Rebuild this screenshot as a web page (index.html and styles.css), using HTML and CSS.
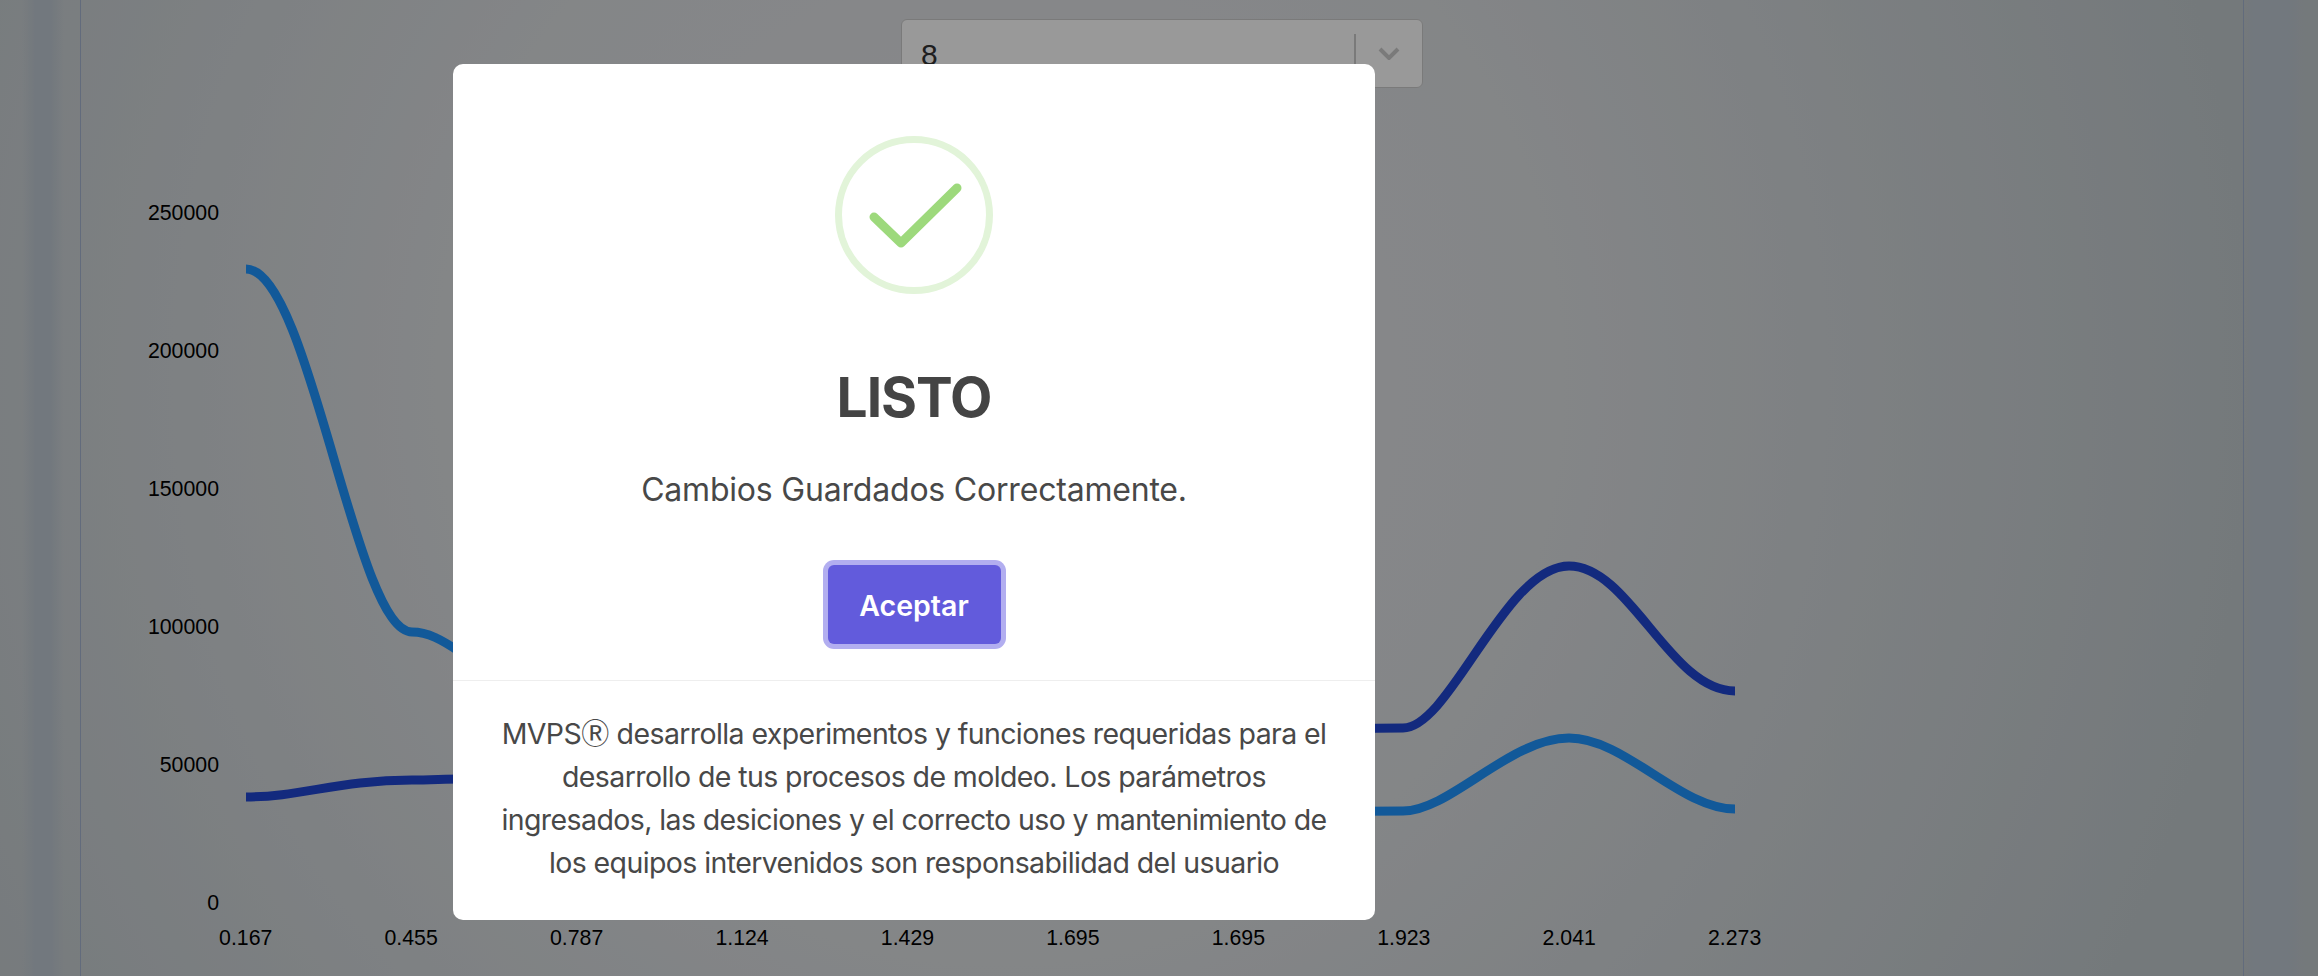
FILE: index.html
```html
<!DOCTYPE html>
<html lang="es">

<head>
    <meta charset="UTF-8">
    <title>MVPS</title>
    <link rel="stylesheet" href="styles.css">
</head>

<body>
    <div class="page">
        <div class="rail"></div>
        <main class="content">
            <div class="select-box">
                <span class="select-value">8</span>
                <span class="select-sep"></span>
                <svg class="select-arrow" viewBox="0 0 22 13">
                    <path d="M2 2l9 9 9-9" fill="none" stroke="#ccc" stroke-width="4" />
                </svg>
            </div>

            <div class="chart">
                <div class="y-axis">
                    <span>250000</span>
                    <span>200000</span>
                    <span>150000</span>
                    <span>100000</span>
                    <span>50000</span>
                    <span>0</span>
                </div>
                <svg class="plot" viewBox="246 201 1489 714">
                    <path class="line-light"
                        d="M246 269C310 270 355 632 412 632C428 632 442 640 460 652C520 700 560 760 620 790C900 830 1200 811 1403 811C1450 811 1510 738 1569 738C1625 738 1680 809 1735 809" />
                    <path class="line-dark"
                        d="M246 797C300 797 340 780 412 780C430 780 445 779 460 779C700 775 1200 728 1403 728C1450 728 1505 566 1569 566C1630 566 1670 691 1735 691" />
                </svg>
                <div class="x-axis">
                    <span>0.167</span>
                    <span>0.455</span>
                    <span>0.787</span>
                    <span>1.124</span>
                    <span>1.429</span>
                    <span>1.695</span>
                    <span>1.695</span>
                    <span>1.923</span>
                    <span>2.041</span>
                    <span>2.273</span>
                </div>
            </div>
        </main>
        <div class="rail rail-right"></div>
    </div>

    <div class="overlay">
        <div class="modal">
            <svg class="success-icon" viewBox="0 0 158 158">
                <circle cx="79" cy="79" r="75.5" fill="none" stroke="#e2f4d9" stroke-width="7" />
                <path d="M39 81L66 107L122 52" fill="none" stroke="#9dd97c" stroke-width="9" stroke-linecap="round"
                    stroke-linejoin="round" />
            </svg>
            <h2 class="modal-title">LISTO</h2>
            <p class="modal-text">Cambios Guardados Correctamente.</p>
            <button type="button" class="modal-button">Aceptar</button>
            <div class="modal-footer">MVPS<span class="reg-mark">Ⓡ</span> desarrolla experimentos y funciones requeridas
                para el desarrollo de tus procesos de moldeo. Los parámetros ingresados, las desiciones y el correcto uso
                y mantenimiento de los equipos intervenidos son responsabilidad del usuario</div>
        </div>
    </div>
</body>

</html>
```

FILE: styles.css
```css
body {
    margin: 0;
    height: 976px;
    overflow: hidden;
    font-family: "Liberation Sans", Arial, sans-serif;
    background: radial-gradient(ellipse 1250px 1300px at 1000px 380px, #e6e6ea 0%, #dcdfe2 45%, #c2cace 100%);
}

.page {
    display: flex;
    height: 976px;
}

/* faint blue band inside each side rail */
.rail {
    width: 80px;
    flex-shrink: 0;
    background: linear-gradient(to right, transparent 22px, #bec8d2 36px, #bec8d2 50px, transparent 64px);
    border-right: 1px solid #a3b2cf;
}

.rail-right {
    width: 74px;
    background: linear-gradient(to right, transparent 0, #bec8d2 10px, #bec8d2 44px, transparent 60px);
    border-right: none;
    border-left: 1px solid #a3b2cf;
}

.content {
    flex: 1;
    padding-top: 19px;
}

.select-box {
    display: flex;
    align-items: center;
    box-sizing: border-box;
    width: 522px;
    height: 69px;
    margin: 0 auto;
    background: white;
    border: 1px solid #ccc;
    border-radius: 6px;
}

.select-value {
    flex: 1;
    padding-left: 19px;
    padding-top: 2px;
    font-size: 30px;
    color: #333;
}

.select-sep {
    width: 2px;
    height: 40px;
    background: #ccc;
}

.select-arrow {
    width: 22px;
    height: 13px;
    margin: 0 22px;
}

.chart {
    display: grid;
    grid-template-columns: 138px 1489px;
    column-gap: 27px;
    margin-top: 113px;
}

.y-axis {
    display: flex;
    flex-direction: column;
    justify-content: space-between;
    align-items: flex-end;
    height: 714px;
    font-size: 21.3px;
    line-height: 24px;
    color: #000;
}

.plot {
    display: block;
    width: 1489px;
    height: 714px;
    fill: none;
    stroke-width: 9;
}

.line-light {
    stroke: #1e94ff;
}

.line-dark {
    stroke: #2146d2;
}

.x-axis {
    grid-column: 1 / 3;
    display: grid;
    grid-template-columns: repeat(10, 165.44px);
    margin: 11px 0 0 82px;
    font-size: 21.3px;
    line-height: 24px;
    text-align: center;
    color: #000;
}

.overlay {
    position: fixed;
    top: 0;
    left: 0;
    right: 0;
    bottom: 0;
    background: rgba(0, 0, 0, 0.4);
}

.modal {
    position: absolute;
    left: 453px;
    top: 64px;
    width: 922px;
    height: 856px;
    box-sizing: border-box;
    padding-top: 72px;
    background: white;
    border-radius: 10px;
    text-align: center;
    font-family: Inter, "Liberation Sans", sans-serif;
}

.success-icon {
    display: block;
    width: 158px;
    height: 158px;
    margin: 0 auto;
}

.modal-title {
    margin: 70px 0 0;
    font-size: 55px;
    font-weight: 700;
    line-height: 66px;
    letter-spacing: -1px;
    color: #444;
}

.modal-text {
    margin: 40px 0 0;
    font-size: 32px;
    line-height: 40px;
    letter-spacing: -0.2px;
    color: #484848;
}

.modal-button {
    display: block;
    width: 173px;
    height: 79px;
    margin: 55px auto 0;
    padding: 2px 0 0;
    border: none;
    border-radius: 6px;
    background: #625bdc;
    box-shadow: 0 0 0 5px #b2aef0;
    color: white;
    font-family: inherit;
    font-size: 28.5px;
    font-weight: 600;
}

.modal-footer {
    margin-top: 36px;
    padding: 31px 40px 0;
    border-top: 1px solid #eee;
    font-size: 28.5px;
    line-height: 43px;
    letter-spacing: -0.6px;
    color: #484848;
}

.reg-mark {
    display: inline-block;
    font-family: "Noto Sans CJK SC", sans-serif;
    font-size: 28px;
    line-height: 28px;
    letter-spacing: 0;
}
```
